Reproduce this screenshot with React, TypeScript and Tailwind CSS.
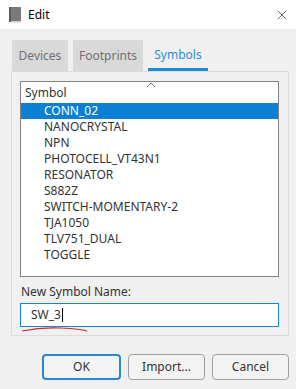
import { X } from 'lucide-react';

const symbols = [
  'CONN_02',
  'NANOCRYSTAL',
  'NPN',
  'PHOTOCELL_VT43N1',
  'RESONATOR',
  'S882Z',
  'SWITCH-MOMENTARY-2',
  'TJA1050',
  'TLV751_DUAL',
  'TOGGLE',
];

export default function App() {
  return (
    <div
      className="w-[296px] h-[389px] bg-[#f0f0f0] flex flex-col text-[12px] text-[#333] overflow-hidden"
      style={{ fontFamily: '"Segoe UI", "Noto Sans", "Open Sans", sans-serif' }}
    >
      {/* Title bar */}
      <div className="h-[29px] bg-white flex items-center shrink-0">
        <svg width="14" height="16" viewBox="0 0 14 16" className="ml-[8px]">
          <rect x="1" y="0" width="12" height="14" fill="#7a7a7a" />
          <rect x="1" y="0" width="2" height="15" fill="#5a5a5a" />
          <rect x="3" y="14" width="10" height="1.5" fill="#d0d0d0" />
        </svg>
        <span className="ml-[6px] text-[12px] text-black">Edit</span>
        <X className="ml-auto mr-[6px] h-[16px] w-[16px] text-[#222]" strokeWidth={1} />
      </div>

      {/* Tabs */}
      <div className="flex pl-[12px] pt-[11px] gap-[5px] h-[42px] shrink-0">
        <div className="w-[56px] h-[31px] bg-[#d9d9d9] flex items-center justify-center text-[#707070]">
          Devices
        </div>
        <div className="w-[70px] h-[31px] bg-[#d9d9d9] flex items-center justify-center text-[#707070]">
          Footprints
        </div>
        <div className="w-[60px] h-[31px] flex items-center justify-center text-[#2a8fd0] border-b-[3px] border-[#1f8ad2] pt-[2px]">
          Symbols
        </div>
      </div>

      {/* Panel */}
      <div className="mx-[11px] w-[278px] h-[265px] border border-[#dcdcdc] flex flex-col pt-[9px] pl-[8px] pr-[9px]">
        <div className="relative h-[196px] bg-white border border-[#828282] flex flex-col">
          <svg width="10" height="6" viewBox="0 0 10 6" className="absolute left-[125px] top-[0px]">
            <path d="M1 5 L5 1 L9 5" fill="none" stroke="#777" strokeWidth="1" />
          </svg>
          <div className="h-[21px] flex items-center pl-[4px]">Symbol</div>
          {symbols.map((s, i) => (
            <div
              key={s}
              className={`h-[16px] flex items-center pl-[23px] leading-none ${
                i === 0 ? 'bg-[#0a7fd4] text-white' : 'text-[#333]'
              }`}
            >
              {s}
            </div>
          ))}
        </div>

        <div className="mt-[6px] h-[17px] flex items-center pl-[1px]">New Symbol Name:</div>
        <div className="relative mt-[3px] h-[24px] bg-white border border-[#1784cf] flex items-center pl-[10px]">
          <span>SW_3</span>
          <span className="ml-[1px] w-px h-[14px] bg-black" />
          <svg width="68" height="6" viewBox="0 0 68 6" className="absolute left-[0px] top-[23px]">
            <path d="M1 4 Q20 0 40 1 T66 4" fill="none" stroke="#d8262b" strokeWidth="1.2" />
          </svg>
        </div>
      </div>

      {/* Buttons */}
      <div className="flex justify-end gap-[7px] pr-[7px] mt-[18px]">
        <button className="w-[79px] h-[26px] rounded-[4px] border-2 border-[#2a88cf] bg-[#f3f3f3]">
          OK
        </button>
        <button className="w-[77px] h-[26px] rounded-[4px] border border-[#a0a0a0] bg-[#f3f3f3]">
          Import...
        </button>
        <button className="w-[77px] h-[26px] rounded-[4px] border border-[#a0a0a0] bg-[#f3f3f3]">
          Cancel
        </button>
      </div>
    </div>
  );
}
